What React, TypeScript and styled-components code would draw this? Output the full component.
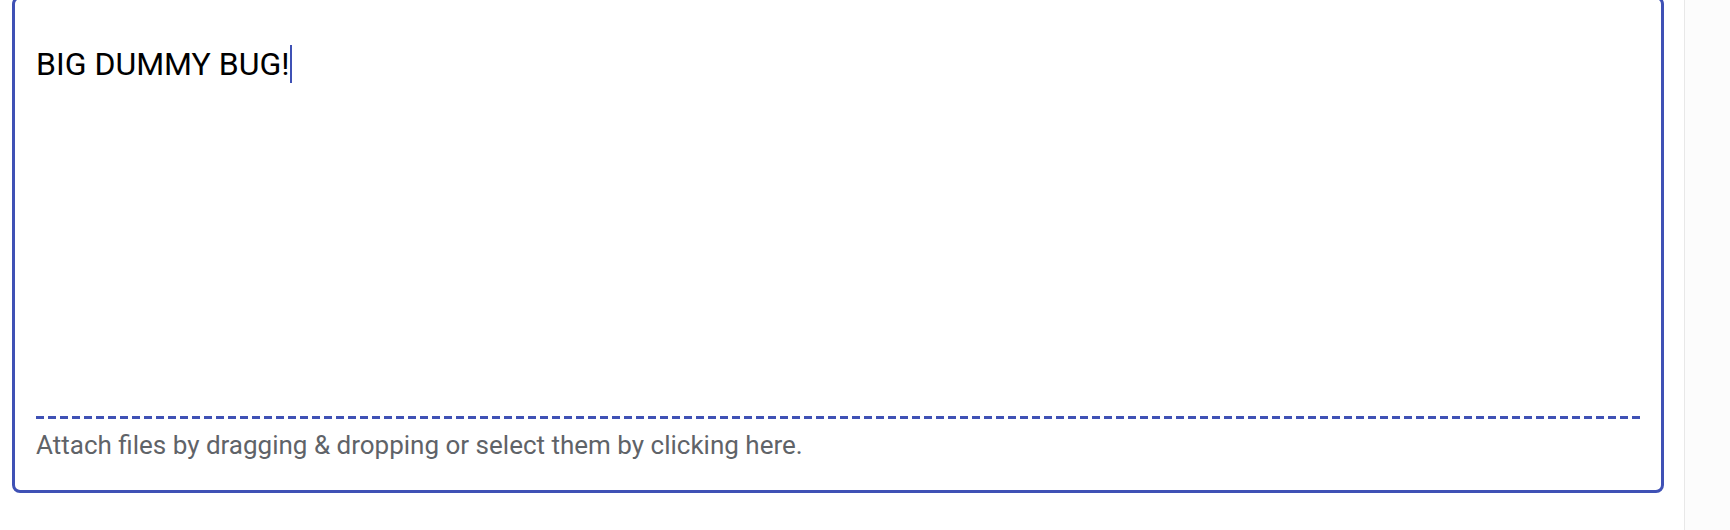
import React from "react";
import styled, { createGlobalStyle } from "styled-components";

export default function App() {
  return (
    <>
      <GlobalStyle />
      <Page>
        <Main>
          <Editor>
            <TextArea>
              BIG DUMMY BUG!
              <Caret />
            </TextArea>
            <DropZone>
              <Dashes />
              <DropHint>
                Attach files by dragging &amp; dropping or select them by
                clicking here.
              </DropHint>
            </DropZone>
          </Editor>
        </Main>
        <Aside />
      </Page>
    </>
  );
}

const GlobalStyle = createGlobalStyle`
  html, body {
    margin: 0;
    padding: 0;
    background: #fff;
    overflow: hidden;
    font-family: Roboto, "Liberation Sans", sans-serif;
  }
`;

const Page = styled.div`
  display: flex;
  width: 100%;
  height: 530px;
`;

const Main = styled.div`
  flex: 1;
  padding: 0 20px 0 12px;
`;

const Editor = styled.div`
  display: flex;
  flex-direction: column;
  box-sizing: border-box;
  height: 497px;
  margin-top: -4px;
  border: 3px solid #3f51b5;
  border-radius: 8px;
  background: #fff;
`;

const TextArea = styled.div`
  flex: 1;
  padding: 46px 21px 0;
  font-size: 32px;
  color: #000;
  white-space: nowrap;
`;

const Caret = styled.span`
  display: inline-block;
  vertical-align: top;
  width: 2px;
  height: 38px;
  margin-left: 1px;
  background: #3f51b5;
`;

const DropZone = styled.div`
  padding: 0 21px 30px;
`;

const Dashes = styled.div`
  height: 3px;
  background: repeating-linear-gradient(
    to right,
    #3f51b5 0,
    #3f51b5 8px,
    transparent 8px,
    transparent 12px
  );
`;

const DropHint = styled.div`
  margin-top: 11px;
  font-size: 26px;
  color: #5f6368;
  white-space: nowrap;
`;

const Aside = styled.aside`
  width: 45px;
  border-left: 1px solid #e8e8e8;
  background: #fcfcfc;
`;
